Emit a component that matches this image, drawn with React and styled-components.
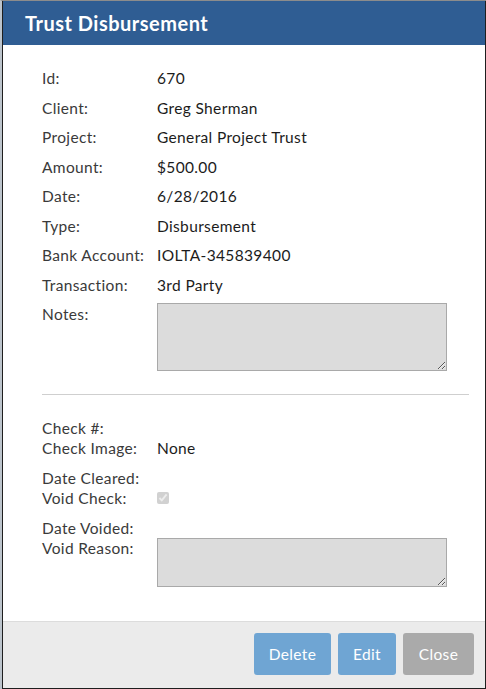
import styled, { createGlobalStyle } from "styled-components";

const GlobalStyle = createGlobalStyle`
    html, body {
        margin: 0;
        padding: 0;
        background: #ffffff;
    }
    * {
        box-sizing: border-box;
    }
`

const Frame = styled.div`
    width: 486px;
    height: 689px;
    border-top: 1px solid #8c8c8c;
    border-left: 2px solid #bcc4cc;
    display: flex;
`

const Dialog = styled.div`
    flex: 1;
    display: flex;
    flex-direction: column;
    border-left: 1px solid #1e1e1e;
    border-right: 1px solid #1e1e1e;
    border-bottom: 1px solid #1e1e1e;
    font-family: Lato, "Open Sans", sans-serif;
    font-size: 15.5px;
    letter-spacing: 0.35px;
    color: #222;
`

const Header = styled.div`
    height: 44px;
    background: #2f5d93;
    padding: 0 0 0 22px;
    display: flex;
    align-items: center;
`

const Title = styled.h1`
    margin: 0;
    font-size: 20px;
    font-weight: 700;
    color: #fff;
    letter-spacing: 0.5px;
`

const Body = styled.div`
    flex: 1;
    padding: 23px 16px 0 39px;
`

const Grid = styled.div`
    display: grid;
    grid-template-columns: 115px 1fr;
    row-gap: ${props => props.$gap}px;
`

const Group = styled.div`
    display: grid;
    grid-template-columns: 115px 1fr;
    margin-bottom: 10px;
`

const Label = styled.div`
    line-height: 20px;
    color: #3a3a3a;
    white-space: nowrap;
`

const Value = styled.div`
    line-height: 20px;
    color: #1c1c1c;
`

const Notes = styled.textarea`
    display: block;
    width: 290px;
    height: ${props => props.$h}px;
    margin-top: ${props => props.$top}px;
    background: #dcdcdc;
    border: 1px solid #a9a9a9;
    border-radius: 0;
    padding: 2px;
    font: inherit;
    outline: none;
`

const Divider = styled.hr`
    border: 0;
    border-top: 1px solid #cfcfcf;
    margin: 23px 0 23px 0;
`

const Check = styled.input`
    margin: 4px 0 0 0;
    width: 12px;
    height: 12px;
`

const Footer = styled.div`
    height: 67px;
    background: #ebebeb;
    border-top: 1px solid #dcdcdc;
    display: flex;
    justify-content: flex-end;
    align-items: flex-start;
    gap: 7px;
    padding: 11px 11px 0 0;
`

const Button = styled.button`
    height: 42px;
    width: ${props => props.$w}px;
    padding: 0;
    border: 0;
    border-radius: 3px;
    background: ${props => (props.$muted ? "#aaaaaa" : "#6fa5d3")};
    color: #fff;
    font-family: Lato, "Open Sans", sans-serif;
    font-size: 15.5px;
    letter-spacing: 0.35px;
    cursor: pointer;
`

const details = [
    ["Id:", "670"],
    ["Client:", "Greg Sherman"],
    ["Project:", "General Project Trust"],
    ["Amount:", "$500.00"],
    ["Date:", "6/28/2016"],
    ["Type:", "Disbursement"],
    ["Bank Account:", "IOLTA-345839400"],
    ["Transaction:", "3rd Party"],
]

export default function App() {
    return (
        <>
            <GlobalStyle />
            <Frame>
                <Dialog>
                    <Header>
                        <Title>Trust Disbursement</Title>
                    </Header>
                    <Body>
                        <Grid $gap={9.5}>
                            {details.map(([label, value]) => [
                                <Label key={label}>{label}</Label>,
                                <Value key={label + "v"}>{value}</Value>,
                            ])}
                            <Label>Notes:</Label>
                            <div>
                                <Notes readOnly $h={68} $top={-1} />
                            </div>
                        </Grid>
                        <Divider />
                        <Group>
                            <Label>Check #:</Label>
                            <Value></Value>
                            <Label>Check Image:</Label>
                            <Value>None</Value>
                        </Group>
                        <Group>
                            <Label>Date Cleared:</Label>
                            <Value></Value>
                            <Label>Void Check:</Label>
                            <Value>
                                <Check type="checkbox" checked disabled readOnly />
                            </Value>
                        </Group>
                        <Group>
                            <Label>Date Voided:</Label>
                            <Value></Value>
                            <Label>Void Reason:</Label>
                            <div>
                                <Notes readOnly $h={49} $top={0} />
                            </div>
                        </Group>
                    </Body>
                    <Footer>
                        <Button $w={77}>Delete</Button>
                        <Button $w={58}>Edit</Button>
                        <Button $w={71} $muted>Close</Button>
                    </Footer>
                </Dialog>
            </Frame>
        </>
    )
}
